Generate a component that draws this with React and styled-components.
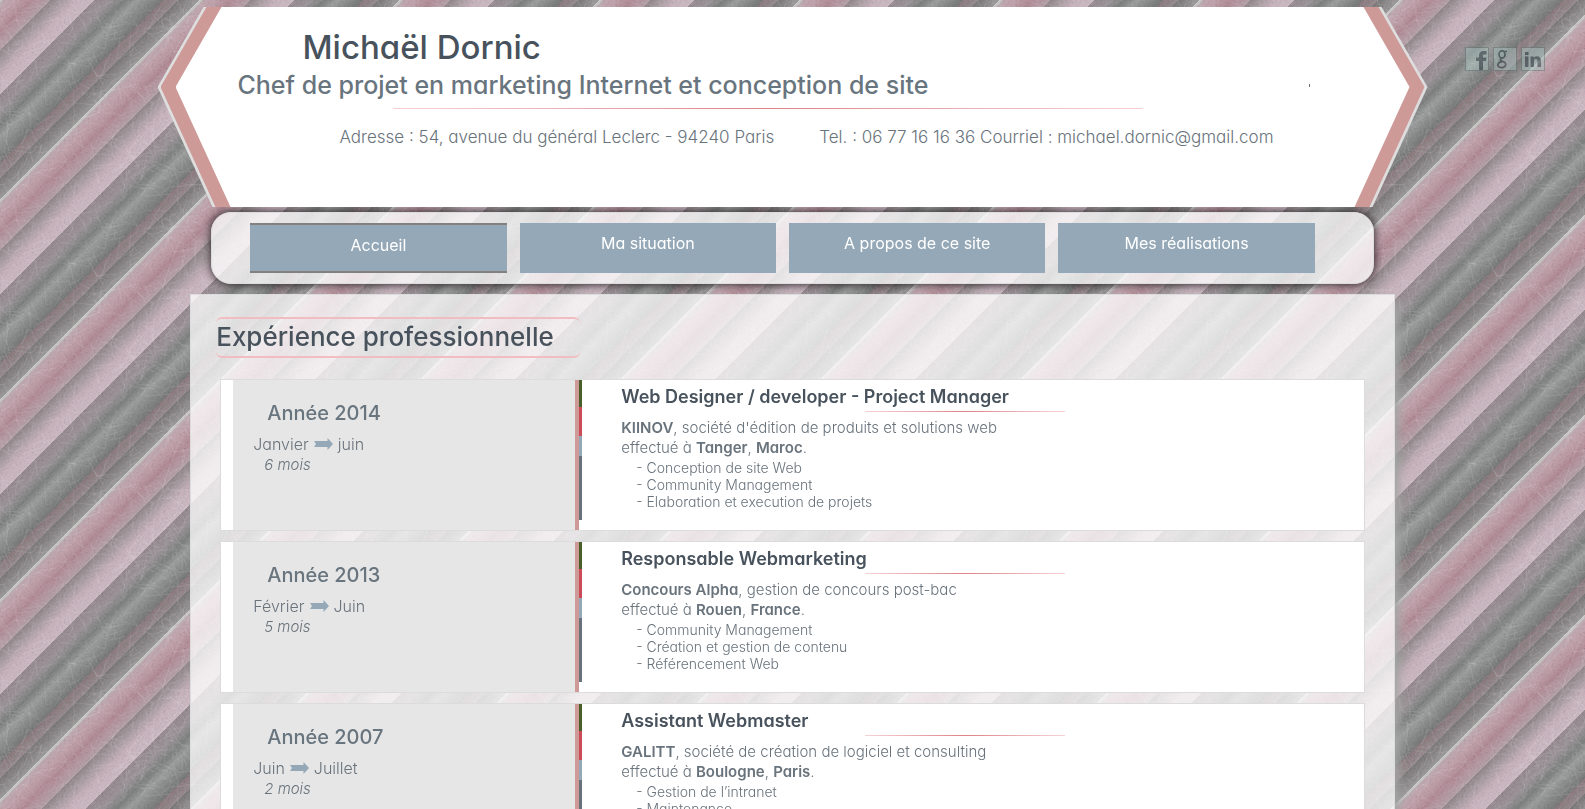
import React from "react";
import styled, { createGlobalStyle, css } from "styled-components";

const GlobalStyle = createGlobalStyle`
  *, *::before, *::after { box-sizing: border-box; }
  html, body { margin: 0; padding: 0; }
  html { background: #9c9295; }
  body {
    font-family: Inter, "Liberation Sans", sans-serif;
    font-feature-settings: "cv11" 1;
    font-weight: 300;
    color: #69737c;
    overflow-x: hidden;
  }
  h1, h2, h3, h4, p, ul { margin: 0; padding: 0; }
  ul { list-style: none; }
  a { color: inherit; text-decoration: none; }
`;

/* ---------- striped, scratched backdrop ---------- */

const STRIPES = [
  [0, "#cbc8c8"], [2, "#c8c4c5"], [4, "#b9a9ad"], [6, "#bfa5ae"], [14, "#c0a0aa"], [24, "#b8949f"],
  [31, "#ae8692"], [35, "#b28e9a"], [50, "#b49fa6"], [51, "#8f8387"], [62, "#a59a9e"],
  [70, "#b9a6af"], [78, "#c8b2bc"], [94, "#ccb8c2"], [95, "#93878c"], [111, "#989094"],
  [120, "#848485"], [125, "#7a7b7b"], [137, "#999a9a"], [150, "#858686"], [162, "#747575"],
  [164, "#86757a"], [178, "#93888b"], [179, "#777476"], [197, "#959293"], [200, "#a09d9d"],
];

const makeScratches = (count) => {
  let seed = 7;
  const rnd = () => {
    seed = (seed * 16807) % 2147483647;
    return seed / 2147483647;
  };
  const out = [];
  for (let i = 0; i < count; i++) {
    const x = Math.round(rnd() * 200);
    const y = Math.round(rnd() * 200);
    const a = rnd() * Math.PI * 2;
    const len = 8 + rnd() * 22;
    const dx = Math.round(Math.cos(a) * len);
    const dy = Math.round(Math.sin(a) * len);
    const bx = Math.round(dx / 2 + (rnd() - 0.5) * 8);
    const by = Math.round(dy / 2 + (rnd() - 0.5) * 8);
    [-200, 0, 200].forEach((ox) =>
      [-200, 0, 200].forEach((oy) => {
        const px = x + ox;
        const py = y + oy;
        if (px > -50 && px < 250 && py > -50 && py < 250) {
          out.push(`M${px} ${py}q${bx} ${by} ${dx} ${dy}`);
        }
      })
    );
  }
  return out.join("");
};

const SCRATCHES = makeScratches(420);

const BackdropSvg = styled.svg`
  position: fixed;
  inset: 0;
  width: 100%;
  height: 100%;
  z-index: -1;
`;

const Backdrop = () => (
  <BackdropSvg aria-hidden="true">
    <defs>
      <linearGradient id="stripes" gradientUnits="userSpaceOnUse" x1="0" y1="0" x2="100" y2="100" spreadMethod="repeat">
        {STRIPES.map(([at, color]) => (
          <stop key={at} offset={at / 200} stopColor={color} />
        ))}
      </linearGradient>
      <filter id="grain" x="0" y="0" width="100%" height="100%">
        <feTurbulence type="fractalNoise" baseFrequency="0.5" numOctaves="3" seed="4" stitchTiles="stitch" />
        <feColorMatrix values="1.4 0 0 0 -0.3  1.4 0 0 0 -0.3  1.4 0 0 0 -0.3  0 0 0 0 0.08" />
      </filter>
      <pattern id="fabric" width="200" height="200" patternUnits="userSpaceOnUse">
        <rect width="200" height="200" fill="url(#stripes)" />
        <rect width="200" height="200" filter="url(#grain)" />
        <path d={SCRATCHES} fill="none" stroke="#fff" strokeWidth="0.6" strokeOpacity="0.15" />
      </pattern>
    </defs>
    <rect width="100%" height="100%" fill="url(#fabric)" />
  </BackdropSvg>
);

/* ---------- header ---------- */

const hexagon = css`
  clip-path: polygon(
    46px 0, calc(100% - 46px) 0, 100% 40%,
    calc(100% - 55px) 100%, 55px 100%, 0 40%
  );
`;

const HeaderEdge = styled.header`
  ${hexagon}
  width: calc(80% + 2px);
  margin: 7px auto 0;
  padding: 0 3px;
  background: #dedede;
`;

const HeaderBand = styled.div`
  ${hexagon}
  padding: 0 15px;
  background: #cd9a98;
`;

const HeaderBody = styled.div`
  ${hexagon}
  min-height: 200px;
  padding: 20px 0 0 62px;
  background: #fff;
`;

const Name = styled.h1`
  padding-left: 65px;
  font-size: 33px;
  line-height: 40px;
  font-weight: 500;
  color: #48525c;
`;

const TaglineRow = styled.div`
  display: flex;
  align-items: center;
  justify-content: space-between;
  padding: 0 100px 5px 0;
`;

const Tagline = styled.h2`
  font-size: 25px;
  line-height: 36px;
  font-weight: 500;
  color: #69757e;
`;

const Tick = styled.span`
  width: 1px;
  height: 3px;
  background: #75686c;
`;

const Rule = styled.div`
  width: ${(p) => p.$width};
  height: 1px;
  margin-left: ${(p) => p.$indent};
  background: linear-gradient(to right, #f6d3d6, #de8388, #f6d3d6);
`;

const Contact = styled.address`
  display: flex;
  gap: 45px;
  padding: 16px 0 0 102px;
  font-size: 17px;
  line-height: 24px;
  font-style: normal;
  white-space: nowrap;
`;

/* ---------- navigation ---------- */

const Nav = styled.nav`
  display: flex;
  gap: 13px;
  width: calc(76% - 42px);
  margin: 5px auto 0;
  padding: 10px 58px 10px 38px;
  border: 1px solid #dcdcdc;
  border-radius: 20px;
  background: rgba(255, 255, 255, 0.75);
  box-shadow: 0 0 8px 1px rgba(30, 25, 28, 0.85);
`;

const NavLink = styled.a`
  flex: 1;
  height: 50px;
  padding-top: 8px;
  background: #94a8b7;
  border: solid #808080;
  border-width: ${(p) => (p.$active ? "2px 0" : "0")};
  color: #fff;
  font-size: 16px;
  line-height: 24px;
  font-weight: 400;
  text-align: center;
`;

/* ---------- content ---------- */

const Content = styled.main`
  width: 76%;
  margin: 10px auto 0;
  padding: 22px 29px 30px;
  border: 1px solid #dcdcdc;
  background: rgba(255, 255, 255, 0.75);
  box-shadow: 7px 5px 9px -3px #a3a5a4;
`;

const SectionTitle = styled.h2`
  width: 364px;
  margin: 0 0 21px -4px;
  padding-bottom: 2px;
  border: solid #f1bdc0;
  border-width: 2px 0;
  border-radius: 6px;
  font-size: 26px;
  line-height: 35px;
  font-weight: 500;
  color: #48525c;
  white-space: nowrap;
`;

const Jobs = styled.div`
  display: grid;
  gap: 10px;
`;

const Card = styled.article`
  display: flex;
  height: 152px;
  padding-left: 12px;
  border: 1px solid #dcdcdc;
  background: #fff;
`;

const Period = styled.div`
  width: 346px;
  flex: none;
  padding: 19px 0 0 20px;
  background: #e6e6e6;
  border-right: 4px solid #cd9a98;
`;

const Year = styled.h3`
  padding-left: 14px;
  margin-bottom: 7px;
  font-size: 20px;
  line-height: 28px;
  font-weight: 500;
  color: #69757e;
`;

const Months = styled.p`
  display: flex;
  align-items: center;
  gap: 5px;
  font-size: 16px;
  line-height: 20px;
`;

const Duration = styled.p`
  padding-left: 11px;
  font-size: 15px;
  line-height: 21px;
  font-style: italic;
`;

const ArrowSvg = styled.svg`
  width: 19px;
  height: 12px;
`;

const Arrow = () => (
  <ArrowSvg viewBox="0 0 19 12" role="img" aria-label="à">
    <path d="M0 3H13.500V0L19 6L13.500 12V9H0L2 6Z" fill="#94a8b7" />
  </ArrowSvg>
);

const ColourBar = styled.div`
  width: 3px;
  height: 140px;
  flex: none;
  background: linear-gradient(
    #4b5f2a 0 27px, #cc4b58 27px 56px, #94a8b7 56px 76px, #69717b 76px
  );
`;

const Details = styled.div`
  flex: 1;
  padding: 3px 0 0 39px;
`;

const JobTitle = styled.h3`
  font-size: 18px;
  line-height: 28px;
  font-weight: 600;
  color: #48525c;
`;

const Summary = styled.p`
  margin-top: 6px;
  font-size: 15px;
  line-height: 20px;

  b { font-weight: 600; }
`;

const Tasks = styled.ul`
  padding: 1px 0 0 15px;
  font-size: 14px;
  line-height: 17px;
`;

/* ---------- social links ---------- */

const Social = styled.div`
  position: absolute;
  top: 47px;
  right: 40px;
  display: flex;
  gap: 4px;
`;

const SocialLink = styled.a`
  display: flex;
  width: 24px;
  height: 24px;
  border: 1px solid #617572;
  background: #a6c0bc;
  opacity: 0.5;

  svg { width: 22px; height: 22px; }
`;

const SOCIALS = [
  {
    label: "Facebook",
    art: <path fill="#263b42" d="M13 22V13h-3V9.500h3V7.500C13 4.500 14.700 3 17.500 3H20.500v3.500h-2c-1.200 0-1.500.5-1.500 1.500v1.500h3.500L20 13h-3v9z" />,
  },
  {
    label: "Google",
    art: (
      <g fill="none" stroke="#263b42" strokeWidth="1.700">
        <ellipse cx="8" cy="6.500" rx="3" ry="3.600" />
        <path d="M10 3.500h3M8 10.200c-3 1.200-1.500 2.600.8 3.300 2.800.8 3.200 2 2.700 3.800-.6 2-3 2.600-5 2.200-2.500-.5-3.300-2.500-2-4.200 1-1.200 2.200-1.500 3.800-1.600" />
      </g>
    ),
  },
  {
    label: "LinkedIn",
    art: (
      <path
        fill="#263b42"
        d="M3 8.500h3.500V19H3zM3 4h3.500v3H3zM8.500 8.500h3.300v1.400c.7-1.100 1.800-1.700 3.200-1.700 2.600 0 4 1.600 4 4.400V19h-3.500v-5.700c0-1.500-.5-2.200-1.600-2.200-1.200 0-1.900.8-1.900 2.300V19H8.500z"
      />
    ),
  },
];

/* ---------- data ---------- */

const NAV = ["Accueil", "Ma situation", "A propos de ce site", "Mes réalisations"];

const JOBS = [
  {
    year: "2014", from: "Janvier", to: "juin", length: "6 mois",
    title: "Web Designer / developer - Project Manager",
    company: "KIINOV", about: "société d'édition de produits et solutions web",
    city: "Tanger", country: "Maroc",
    tasks: ["Conception de site Web", "Community Management", "Elaboration et execution de projets"],
  },
  {
    year: "2013", from: "Février", to: "Juin", length: "5 mois",
    title: "Responsable Webmarketing",
    company: "Concours Alpha", about: "gestion de concours post-bac",
    city: "Rouen", country: "France",
    tasks: ["Community Management", "Création et gestion de contenu", "Référencement Web"],
  },
  {
    year: "2007", from: "Juin", to: "Juillet", length: "2 mois",
    title: "Assistant Webmaster",
    company: "GALITT", about: "société de création de logiciel et consulting",
    city: "Boulogne", country: "Paris",
    tasks: ["Gestion de l’intranet", "Maintenance"],
  },
];

const Job = ({ job }) => (
  <Card>
    <Period>
      <Year>Année {job.year}</Year>
      <Months>
        {job.from} <Arrow /> {job.to}
      </Months>
      <Duration>{job.length}</Duration>
    </Period>
    <ColourBar />
    <Details>
      <JobTitle>{job.title}</JobTitle>
      <Rule $width="200px" $indent="244px" />
      <Summary>
        <b>{job.company}</b>, {job.about}
        <br />
        effectué à <b>{job.city}</b>, <b>{job.country}</b>.
      </Summary>
      <Tasks>
        {job.tasks.map((task) => (
          <li key={task}>- {task}</li>
        ))}
      </Tasks>
    </Details>
  </Card>
);

export default function App() {
  return (
    <>
      <GlobalStyle />
      <Backdrop />
      <HeaderEdge>
        <HeaderBand>
          <HeaderBody>
            <Name>Michaël Dornic</Name>
            <TaglineRow>
              <Tagline>Chef de projet en marketing Internet et conception de site</Tagline>
              <Tick />
            </TaglineRow>
            <Rule $width="64%" $indent="155px" />
            <Contact>
              <span>Adresse : 54, avenue du général Leclerc - 94240 Paris</span>
              <span>
                Tel. : 06 77 16 16 36 Courriel :{" "}
                <a href="mailto:michael.dornic@gmail.com">michael.dornic@gmail.com</a>
              </span>
            </Contact>
          </HeaderBody>
        </HeaderBand>
      </HeaderEdge>
      <Social>
        {SOCIALS.map(({ label, art }) => (
          <SocialLink key={label} href="#" aria-label={label}>
            <svg viewBox="0 0 22 22">{art}</svg>
          </SocialLink>
        ))}
      </Social>
      <Nav>
        {NAV.map((label, i) => (
          <NavLink key={label} href="#" $active={i === 0}>
            {label}
          </NavLink>
        ))}
      </Nav>
      <Content>
        <SectionTitle>Expérience professionnelle</SectionTitle>
        <Jobs>
          {JOBS.map((job) => (
            <Job key={job.year} job={job} />
          ))}
        </Jobs>
      </Content>
    </>
  );
}
